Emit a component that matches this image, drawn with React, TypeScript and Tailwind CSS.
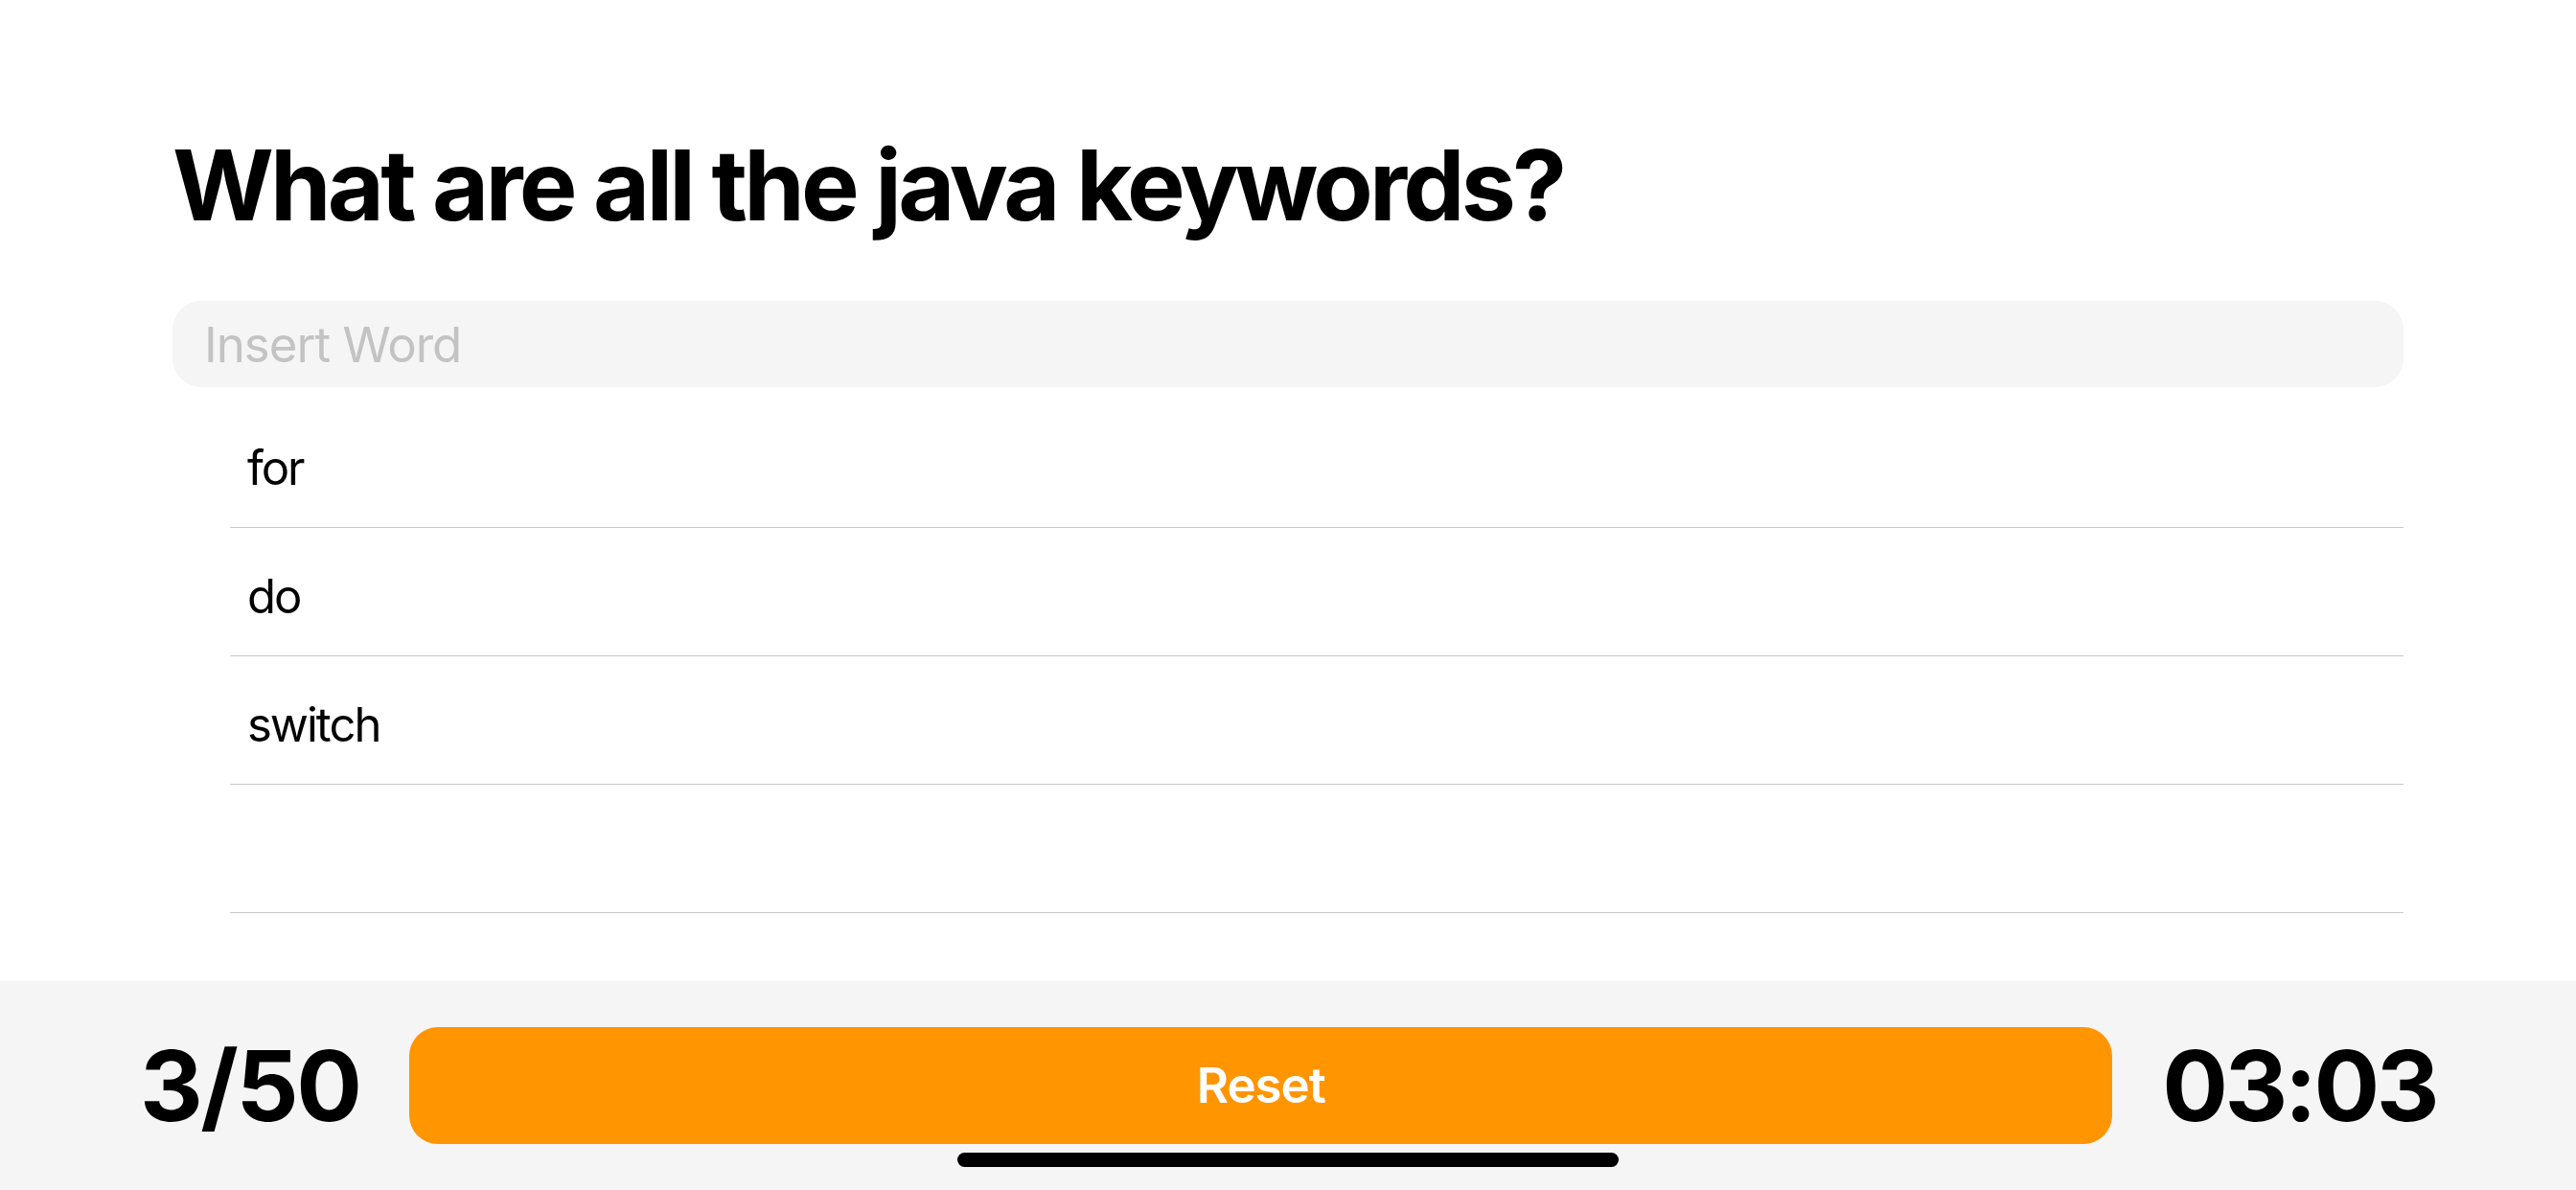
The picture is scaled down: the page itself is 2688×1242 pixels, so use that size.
import React, { useState } from 'react';

const words = ['for', 'do', 'switch', ''];

const App: React.FC = () => {
  const [value, setValue] = useState('');

  return (
    <div className="flex h-[1242px] w-full flex-col bg-white font-['Inter',sans-serif] text-black">
      {/* Question + answers */}
      <main className="flex-1 px-[180px] pt-[133px]">
        <h1 className="text-[102px] font-bold leading-[120px] tracking-[-3.8px]">
          What are all the java keywords?
        </h1>

        <input
          value={value}
          onChange={(e) => setValue(e.target.value)}
          placeholder="Insert Word"
          className="mt-[61px] block h-[90px] w-full rounded-[30px] bg-[#f5f5f5] pl-[33px] text-[51px] tracking-[-1px] text-black outline-none placeholder:text-[#c3c3c3]"
        />

        <ul className="ml-[60px] mt-[13px]">
          {words.map((word, index) => (
            <li
              key={index}
              className="flex h-[134px] items-center border-b border-[#c8c8c8] pl-[18px] pt-[10px] text-[49px] tracking-[-2px]"
            >
              {word}
            </li>
          ))}
        </ul>
      </main>

      {/* Bottom bar */}
      <footer className="relative flex h-[218px] items-center gap-[52px] bg-[#f5f5f5] px-[146px]">
        <span className="text-[102px] font-bold leading-none tracking-[-2.5px]">3/50</span>
        <button className="h-[122px] flex-1 rounded-[30px] bg-[#ff9500] text-[51px] font-semibold tracking-[-1px] text-white">
          Reset
        </button>
        <span className="text-[102px] font-bold leading-none tracking-[-3.5px]">03:03</span>
        <div className="absolute bottom-[24px] left-1/2 h-[15px] w-[690px] -translate-x-1/2 rounded-full bg-black" />
      </footer>
    </div>
  );
};

export default App;
